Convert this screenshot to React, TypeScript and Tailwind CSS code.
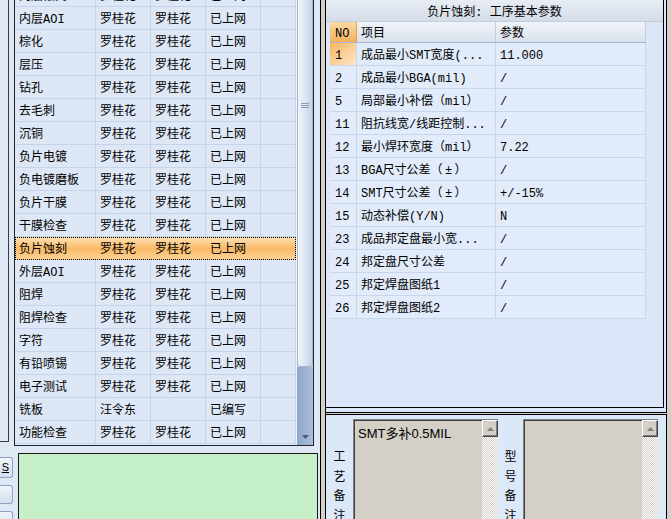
import React from 'react';

const processRows = [
  ['内层蚀刻', '罗桂花', '罗桂花', '已上网'],
  ['内层AOI', '罗桂花', '罗桂花', '已上网'],
  ['棕化', '罗桂花', '罗桂花', '已上网'],
  ['层压', '罗桂花', '罗桂花', '已上网'],
  ['钻孔', '罗桂花', '罗桂花', '已上网'],
  ['去毛刺', '罗桂花', '罗桂花', '已上网'],
  ['沉铜', '罗桂花', '罗桂花', '已上网'],
  ['负片电镀', '罗桂花', '罗桂花', '已上网'],
  ['负电镀磨板', '罗桂花', '罗桂花', '已上网'],
  ['负片干膜', '罗桂花', '罗桂花', '已上网'],
  ['干膜检查', '罗桂花', '罗桂花', '已上网'],
  ['负片蚀刻', '罗桂花', '罗桂花', '已上网'],
  ['外层AOI', '罗桂花', '罗桂花', '已上网'],
  ['阻焊', '罗桂花', '罗桂花', '已上网'],
  ['阻焊检查', '罗桂花', '罗桂花', '已上网'],
  ['字符', '罗桂花', '罗桂花', '已上网'],
  ['有铅喷锡', '罗桂花', '罗桂花', '已上网'],
  ['电子测试', '罗桂花', '罗桂花', '已上网'],
  ['铣板', '汪令东', '', '已编写'],
  ['功能检查', '罗桂花', '罗桂花', '已上网'],
];

const params: [string, React.ReactNode, string][] = [
  ['1', '成品最小SMT宽度(...', '11.000'],
  ['2', '成品最小BGA(mil)', '/'],
  ['5', '局部最小补偿（mil）', '/'],
  ['11', '阻抗线宽/线距控制...', '/'],
  ['12', '最小焊环宽度（mil）', '7.22'],
  ['13', <>BGA尺寸公差（<span className="inline-block w-[12px] text-center">±</span>）</>, '/'],
  ['14', <>SMT尺寸公差（<span className="inline-block w-[12px] text-center">±</span>）</>, '+/-15%'],
  ['15', '动态补偿(Y/N)', 'N'],
  ['23', '成品邦定盘最小宽...', '/'],
  ['24', '邦定盘尺寸公差', '/'],
  ['25', '邦定焊盘图纸1', '/'],
  ['26', '邦定焊盘图纸2', '/'],
];

const SELECTED = '负片蚀刻';

function ClassicScroll() {
  return (
    <div className="w-[16px] flex flex-col">
      <div className="h-[17px] bg-[#d4d0c8] border border-t-white border-l-white border-r-[#404040] border-b-[#404040] shadow-[inset_-1px_-1px_0_#808080] flex items-center justify-center">
        <svg width="7" height="4" viewBox="0 0 7 4">
          <polygon points="3.5,0 7,4 0,4" fill="#808080" />
        </svg>
      </div>
      <div className="flex-1 bg-[repeating-conic-gradient(#ffffff_0%_25%,#d4d0c8_0%_50%)] bg-[length:2px_2px]" />
    </div>
  );
}

function VerticalLabel({ text }: { text: string }) {
  return (
    <div className="flex flex-col items-center pt-[27px] leading-[19.5px] text-[12px]">
      {text.split('').map((c, i) => (
        <span key={i}>{c}</span>
      ))}
    </div>
  );
}

export default function App() {
  return (
    <div className="w-[671px] h-[519px] overflow-hidden flex bg-[#d4d0c8] text-[12px] text-black font-['Liberation_Mono','Noto_Sans_CJK_SC',monospace]">
      {/* left side */}
      <div className="w-[320px] shrink-0 bg-[#dfe8f5] flex flex-col">
        <div className="h-[446px] shrink-0 flex">
          <div className="w-[9px] h-[442px] border-r border-b border-[#3c3c3c]" />
          <div className="w-[5px]" />
          <div className="w-[300px] h-[446px] border-l border-r border-b border-[#1e2530] flex">
            <div className="w-[281px] overflow-hidden bg-[#dde7f6]">
              <div className="-mt-[16px]">
                {processRows.map((r) => {
                  const sel = r[0] === SELECTED;
                  const cell = sel ? '' : 'border-r border-[#c6d4e7]';
                  return (
                    <div
                      key={r[0]}
                      className={
                        sel
                          ? 'h-[23px] flex items-center outline outline-1 outline-dotted outline-offset-[-1px] outline-black bg-gradient-to-b from-[#fde2b4] via-[#f9ba68] to-[#fcd396]'
                          : 'h-[23px] flex items-center border-b border-[#c6d4e7]'
                      }
                    >
                      <div className={`w-[81px] h-full pl-[4px] pt-[3px] flex items-center ${cell}`}>{r[0]}</div>
                      <div className={`w-[55px] h-full pl-[4px] pt-[3px] flex items-center ${cell}`}>{r[1]}</div>
                      <div className={`w-[55px] h-full pl-[4px] pt-[3px] flex items-center ${cell}`}>{r[2]}</div>
                      <div className={`w-[55px] h-full pl-[4px] pt-[3px] flex items-center ${cell}`}>{r[3]}</div>
                      <div className={`w-[35px] h-full ${cell}`} />
                    </div>
                  );
                })}
              </div>
            </div>
            {/* office-style scrollbar */}
            <div className="w-[17px] flex flex-col border-l border-[#eef3fa]">
              <div className="h-[367px] shrink-0 rounded-b-[3px] border border-t-0 border-[#a2b5cf] bg-gradient-to-r from-[#f1f5fb] via-[#dde6f2] to-[#c5d4e8] flex flex-col items-center pt-[103px] gap-[1px]">
                <div className="w-[8px] h-[1px] bg-[#8b9cb6]" />
                <div className="w-[8px] h-[1px] bg-[#8b9cb6]" />
                <div className="w-[8px] h-[1px] bg-[#8b9cb6]" />
              </div>
              <div className="flex-1 bg-gradient-to-r from-[#8da7ca] to-[#abbfd9] flex items-end justify-center pb-[6px]">
                <svg width="7" height="4" viewBox="0 0 7 4">
                  <polygon points="0,0 7,0 3.5,4" fill="#4b5a70" />
                </svg>
              </div>
            </div>
          </div>
        </div>
        <div className="flex-1 min-h-0 overflow-hidden flex">
          <div className="w-[13px] flex flex-col pt-[11px] gap-[7px]">
            <div className="h-[21px] shrink-0 rounded-r-[3px] border border-l-0 border-[#8ea3c1] bg-gradient-to-b from-[#f0f4fa] to-[#d3dfee] flex items-center justify-end pr-[3px] text-[11px] font-['Liberation_Sans',sans-serif] overflow-hidden">
              <span className="underline">S</span>
            </div>
            <div className="h-[19px] shrink-0 rounded-r-[3px] border border-l-0 border-[#8ea3c1] bg-gradient-to-b from-[#f0f4fa] to-[#d3dfee]" />
            <div className="h-[19px] shrink-0 rounded-r-[3px] border border-l-0 border-[#8ea3c1] bg-gradient-to-b from-[#f0f4fa] to-[#d3dfee]" />
          </div>
          <div className="ml-[5px] mt-[7px] w-[300px] h-[80px] shrink-0 border border-[#1a1a1a] bg-[#c5efc6]" />
        </div>
      </div>

      {/* splitter */}
      <div className="w-[6px] shrink-0 border-x border-black bg-[#d4d0c8]" />

      {/* right side */}
      <div className="flex-1 flex flex-col">
        <div className="w-[341px] h-[413px] shrink-0 border-r border-b border-black bg-[#dbe7f8]">
          <div className="w-[338px] h-[408px] border-r border-b border-black flex flex-col">
            <div className="h-[22px] shrink-0 pt-[4px] flex items-center justify-center bg-gradient-to-b from-[#e8edf4] to-[#d4dce8] border-b border-[#c3cddb]">
              负片蚀刻: 工序基本参数
            </div>
            <div className="pl-[4px]">
              <div className="w-[316px] flex h-[21px] border-b border-[#a7b6ca]">
                <div className="w-[27px] pl-[5px] pt-[3px] flex items-center bg-gradient-to-b from-[#fbd9a6] to-[#f3b15c] border-r border-[#e3a24f]">NO</div>
                <div className="w-[139px] pl-[4px] pt-[3px] flex items-center bg-gradient-to-b from-[#f1f4f9] to-[#d9e1ec] border-r border-[#c4cfdd]">项目</div>
                <div className="w-[150px] pl-[4px] pt-[3px] flex items-center bg-gradient-to-b from-[#f1f4f9] to-[#d9e1ec] border-r border-[#c4cfdd]">参数</div>
              </div>
              {params.map((p, i) => (
                <div key={p[0]} className="w-[316px] flex h-[23px] border-b border-[#c8d6e9] bg-[#e1ebf9]">
                  <div
                    className={`w-[27px] pl-[5px] pt-[3px] flex items-center border-r border-[#c8d6e9] ${
                      i === 0 ? 'bg-gradient-to-br from-[#f7b65c] to-[#fde7c8]' : ''
                    }`}
                  >
                    {p[0]}
                  </div>
                  <div className="w-[139px] pl-[4px] pt-[3px] flex items-center border-r border-[#c8d6e9] whitespace-nowrap overflow-hidden">{p[1]}</div>
                  <div className="w-[150px] pl-[4px] pt-[3px] flex items-center border-r border-[#c8d6e9]">{p[2]}</div>
                </div>
              ))}
            </div>
          </div>
        </div>
        <div className="h-[1px] shrink-0" />
        <div className="w-[341px] flex-1 min-h-0 overflow-hidden border-t border-r border-black bg-[#dbe8f8] flex pt-[4px] font-['Noto_Sans_CJK_SC',sans-serif]">
          <div className="w-[27px]">
            <VerticalLabel text="工艺备注" />
          </div>
          <div className="w-[145px] h-[110px] shrink-0 flex border-t border-l border-[#808080] shadow-[inset_1px_1px_0_#404040] bg-[#d4d0c8]">
            <div className="flex-1 pl-[4px] pt-[2px] text-[13px] leading-[24px] font-['Liberation_Sans','Noto_Sans_CJK_SC',sans-serif]">
              SMT多补0.5MIL
            </div>
            <ClassicScroll />
          </div>
          <div className="w-[25px]">
            <VerticalLabel text="型号备注" />
          </div>
          <div className="w-[135px] h-[110px] shrink-0 flex border-t border-l border-[#808080] shadow-[inset_1px_1px_0_#404040] bg-[#d4d0c8]">
            <div className="flex-1" />
            <ClassicScroll />
          </div>
        </div>
      </div>
    </div>
  );
}
